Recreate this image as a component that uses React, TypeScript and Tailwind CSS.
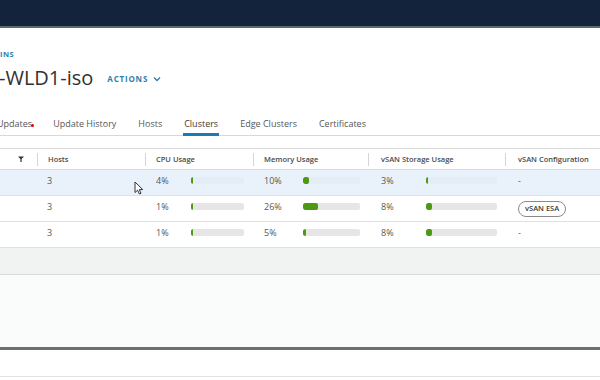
import React from 'react';

type Row = {
  hosts: string;
  cpu: number;
  mem: number;
  vsan: number;
  config: string;
  selected?: boolean;
};

const rows: Row[] = [
  { hosts: '3', cpu: 4, mem: 10, vsan: 3, config: '-', selected: true },
  { hosts: '3', cpu: 1, mem: 26, vsan: 8, config: 'vSAN ESA' },
  { hosts: '3', cpu: 1, mem: 5, vsan: 8, config: '-' },
];

const tabs = ['Update History', 'Hosts', 'Clusters', 'Edge Clusters', 'Certificates'];

const Bar = ({ value, width, faded }: { value: number; width: number; faded?: boolean }) => (
  <div
    className={`h-[7px] overflow-hidden rounded-[2px] ${faded ? 'bg-[#e4edf5]' : 'bg-[#e6e6e6]'}`}
    style={{ width }}
  >
    <div
      className="h-full rounded-[2px] bg-[#4d9a12]"
      style={{ width: Math.max(1.5, (value / 100) * width) }}
    />
  </div>
);

const Cursor = () => (
  <svg className="absolute left-[134px] top-[181px]" width="10" height="14" viewBox="0 0 10 14">
    <path d="M1 1 L1 11.5 L3.6 9.2 L5.4 13 L7 12.3 L5.3 8.6 L8.8 8.6 Z" fill="#fff" stroke="#333" strokeWidth="1" strokeLinejoin="round" />
  </svg>
);

export default function App() {
  return (
    <div className="relative flex h-[380px] w-[600px] flex-col overflow-hidden bg-white font-['Open_Sans',sans-serif] text-[#565656]">
      <div className="h-[28px] shrink-0 border-b-2 border-[#5b6a72] bg-[#12233b]" />

      <div className="mt-[21px] text-[7.5px] font-bold leading-[10px] tracking-[0.5px] text-[#2f7fae]">INS</div>

      <div className="mt-[6px] flex items-center gap-[14px]">
        <h1 className="ml-[-1px] text-[20px] leading-[26px] text-[#313131]">-WLD1-iso</h1>
        <button className="mt-[1px] flex items-center gap-[5px] text-[8px] font-bold tracking-[0.8px] text-[#2f7fae]">
          ACTIONS
          <svg width="8" height="6" viewBox="0 0 8 6">
            <path d="M1 1.5 L4 4.5 L7 1.5" fill="none" stroke="#2f7fae" strokeWidth="1.4" />
          </svg>
        </button>
      </div>

      <nav className="mt-[22px] flex h-[23px] shrink-0 items-stretch border-b border-[#d8d8d8] text-[9px]">
        <div className="relative ml-[-3px] mb-[-1px] flex items-center border-b-[3px] border-transparent pt-[2px]">
          Updates
          <span className="absolute right-[-2px] top-[11px] h-[3px] w-[3px] rounded-full bg-[#e20000]" />
        </div>
        {tabs.map((t) => (
          <div
            key={t}
            className={`ml-[20px] mb-[-1px] flex items-center border-b-[3px] px-[1px] pt-[2px] ${
              t === 'Clusters' ? 'border-[#1d7ab2] text-[#3a3a3a]' : 'border-transparent'
            }`}
          >
            {t}
          </div>
        ))}
      </nav>

      <div className="mt-[12px] border-t border-[#dcdcdc]">
        <div className="flex h-[21px] items-center border-b border-[#dcdcdc] text-[7.5px] font-semibold text-[#4a4a4a]">
          <div className="flex w-[37px] justify-end pr-[13px]">
            <svg width="6" height="6" viewBox="0 0 6 6">
              <path d="M0 0.5 H6 L3.6 3 V6 H2.4 V3 Z" fill="#333" />
            </svg>
          </div>
          <div className="h-[13px] w-[108px] border-l border-[#d4d4d4] pl-[10px] leading-[13px]">Hosts</div>
          <div className="h-[13px] w-[108px] border-l border-[#d4d4d4] pl-[10px] leading-[13px]">CPU Usage</div>
          <div className="h-[13px] w-[115px] border-l border-[#d4d4d4] pl-[10px] leading-[13px]">Memory Usage</div>
          <div className="h-[13px] w-[137px] border-l border-[#d4d4d4] pl-[12px] leading-[13px]">vSAN Storage Usage</div>
          <div className="h-[13px] flex-1 border-l border-[#d4d4d4] pl-[12px] leading-[13px]">vSAN Configuration</div>
        </div>

        {rows.map((r, i) => (
          <div
            key={i}
            className={`flex h-[26px] items-center border-b border-[#e0e0e0] pb-[4px] text-[9px] ${
              r.selected ? 'bg-[#e9f2fa]' : 'bg-white'
            }`}
          >
            <div className="w-[37px]" />
            <div className="w-[108px] pl-[10px]">{r.hosts}</div>
            <div className="flex w-[108px] items-center pl-[11px]">
              <span className="w-[35px] text-[#565656]">{r.cpu}%</span>
              <Bar value={r.cpu} width={53} faded={r.selected} />
            </div>
            <div className="flex w-[115px] items-center pl-[11px]">
              <span className="w-[39px]">{r.mem}%</span>
              <Bar value={r.mem} width={57} faded={r.selected} />
            </div>
            <div className="flex w-[137px] items-center pl-[13px]">
              <span className="w-[45px]">{r.vsan}%</span>
              <Bar value={r.vsan} width={71} faded={r.selected} />
            </div>
            <div className="flex-1 pl-[13px]">
              {r.config === '-' ? (
                <span>-</span>
              ) : (
                <span className="mt-[5px] inline-flex h-[16px] items-center rounded-full border border-[#8a8a8a] px-[6px] text-[7.5px] font-semibold text-[#3a3a3a]">
                  {r.config}
                </span>
              )}
            </div>
          </div>
        ))}

        <div className="h-[27px] border-b border-[#dadada] bg-[#f1f2f2]" />
      </div>

      <div className="h-[72px] shrink-0 bg-[#fafbfb]" />
      <div className="h-[3px] shrink-0 bg-[#6e6e6e]" />
      <div className="h-[27px] shrink-0 border-b border-[#e2e2e2] bg-white" />

      <Cursor />
    </div>
  );
}
